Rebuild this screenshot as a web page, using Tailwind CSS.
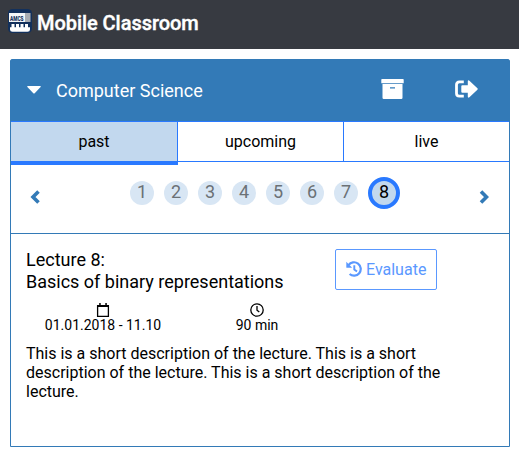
<!DOCTYPE html>
<html lang="en">
<head>
<meta charset="utf-8">
<title>Mobile Classroom</title>
<script src="https://cdn.jsdelivr.net/npm/@tailwindcss/browser@4"></script>
</head>
<body class="bg-white text-black font-[Roboto,sans-serif] h-[449px] overflow-hidden">
<header class="h-[49px] bg-[#373a41] flex items-center pl-2 pb-[3px]">
  <svg class="w-6 h-6 mb-[5px] overflow-visible" viewBox="0 0 24 24">
    <rect width="24" height="24" rx="4.500" fill="#12305c"/>
    <rect x="1" y="4" width="16" height="9" fill="#f4f6f8"/>
    <rect x="17" y="4" width="5.500" height="9" fill="#a9adb3"/>
    <text x="2" y="11.500" font-family="Roboto" font-weight="900" font-size="8" textLength="13.500" lengthAdjust="spacingAndGlyphs" fill="#12305c">AMCS</text>
    <path fill="#fff" d="M2 20.500v-2.200h1.500V15h3v3.300H8V15h3v3.300h1.500V15h3v3.300H17V15h3v3.300h2v2.200q0 2.200-2.500 2.200h-15Q2 22.700 2 20.500z"/>
  </svg>
  <h1 class="ml-[5px] text-[20px] leading-6 tracking-[-0.050px] font-medium text-white whitespace-nowrap [-webkit-text-stroke:0.4px_white]">Mobile Classroom</h1>
</header>
<main class="mt-[10px] ml-[10px] w-[500px] h-[388px] border border-[#337ab7] rounded-t-[2px] flex flex-col">
  <div class="h-[61px] bg-[#337ab7] text-white flex items-center shrink-0">
    <svg class="ml-4 w-[14px] h-2 mb-[1px]" viewBox="0 0 14 8"><path d="M.8 0h12.400q1 .3.400 1L7.700 7.200q-.7.600-1.400 0L.4 1Q-.2.300.8 0z" fill="#fff"/></svg>
    <span class="ml-[15px] text-[18px] leading-6">Computer Science</span>
    <svg class="ml-auto w-[23px] h-5 mb-[4px]" viewBox="0 0 23 20"><path fill="#fff" fill-rule="evenodd" d="M1 0h21q.7 0 .7.700v3.500H.3V.7Q.3 0 1 0zM1.500 4.900h20v13.900q0 1.200-1.200 1.200H2.700q-1.200 0-1.200-1.200zM9 8.200v1.200h5V8.200z"/></svg>
    <svg class="ml-[51px] mr-[31px] w-[23px] h-[18px] mb-[4px]" viewBox="0 0 23 18"><path fill="none" stroke="#fff" stroke-width="2.800" d="M8.800 1.900H4.400q-2.900 0-2.900 2.900v8.400q0 2.900 2.900 2.900h4.400"/><path fill="#fff" d="M7.300 5.200h5.500V1.500q0-1.900 1.600-.7l8 7.500q.7.700 0 1.400l-8 7.500q-1.600 1.200-1.600-.7v-3.700H7.300q-1 0-1-1V6.200q0-1 1-1z"/></svg>
  </div>
  <nav class="h-[41px] shrink-0 border-y border-[#2979ff] grid grid-cols-[167px_166px_165px] grid-rows-[39px] text-[16px] leading-[39px] text-center">
    <div class="h-[43px] bg-[#c2d8ee] border-r border-b-4 border-r-[#2979ff] border-b-[#2979ff]">past</div>
    <div class="border-r border-[#2979ff]">upcoming</div>
    <div>live</div>
  </nav>
  <div class="h-[72px] shrink-0 border-b border-[#337ab7] flex items-center pl-[19px] pr-5">
    <svg class="w-[10px] h-[14px] mb-[1px]" viewBox="0 0 10 14"><path d="M8.500 1.500L3 7l5.500 5.500" fill="none" stroke="#337ab7" stroke-width="3.600"/></svg>
    <div class="ml-[90px] mb-[9px] flex items-center gap-[10px] text-[18px] leading-[22px] text-center text-[#6b7176]">
      <span class="size-6 rounded-full bg-[#d8e6f4]">1</span>
      <span class="size-6 rounded-full bg-[#d8e6f4]">2</span>
      <span class="size-6 rounded-full bg-[#d8e6f4]">3</span>
      <span class="size-6 rounded-full bg-[#d8e6f4]">4</span>
      <span class="size-6 rounded-full bg-[#d8e6f4]">5</span>
      <span class="size-6 rounded-full bg-[#d8e6f4]">6</span>
      <span class="size-6 rounded-full bg-[#d8e6f4]">7</span>
      <span class="size-8 rounded-full bg-[#c2d8ee] border-4 border-[#2979ff] text-black">8</span>
    </div>
    <svg class="ml-auto w-[10px] h-[14px] mb-[1px]" viewBox="0 0 10 14"><path d="M2 1.500L7.500 7l-5.500 5.500" fill="none" stroke="#337ab7" stroke-width="3.600"/></svg>
  </div>
  <section class="px-[15px] pt-[15px]">
    <div class="flex">
      <h2 class="w-[309px] text-[18px] leading-[22px]">Lecture 8:<br>Basics of binary representations</h2>
      <button class="w-[102px] h-[41px] border border-[#5a98ff] rounded-[2px] text-[#5a98ff] text-[16px] flex items-center pl-[10px] whitespace-nowrap">
        <svg class="w-4 h-4 mr-1 mb-[1px] shrink-0" viewBox="0 0 16 16"><path fill="none" stroke="currentColor" stroke-width="2.200" d="M2.500 4.200A6.700 6.700 0 1 1 3.600 13"/><path fill="currentColor" d="M.3.800v5.400q0 .5.500.5h5.400z"/><path fill="none" stroke="currentColor" stroke-width="1.900" d="M8.300 4.300v4.200l2.700 2.100"/></svg>
        Evaluate
      </button>
    </div>
    <div class="mt-[10px] flex text-[14px] leading-4">
      <div class="w-[154px] flex flex-col items-center">
        <svg class="w-[14px] h-[14px]" viewBox="0 0 14 14"><path fill="none" stroke="#000" stroke-width="1.300" d="M1.600 3h10.800v10.300H1.600z"/><path d="M1 2h12v2H1zM3.200 0h1.500v3H3.200zM9.300 0h1.500v3H9.300z"/></svg>
        <span>01.01.2018 - 11.10</span>
      </div>
      <div class="w-[154px] flex flex-col items-center">
        <svg class="w-[14px] h-[14px]" viewBox="0 0 14 14"><circle cx="7" cy="7" r="6.200" fill="none" stroke="#000" stroke-width="1.300"/><path fill="none" stroke="#000" stroke-width="1.300" d="M7 3v4.300l2.300 1.800"/></svg>
        <span>90 min</span>
      </div>
    </div>
    <p class="mt-[11px] w-[430px] text-[16px] leading-[19px]">This is a short description of the lecture. This is a short description of the lecture. This is a short description of the lecture.</p>
  </section>
</main>
</body>
</html>
